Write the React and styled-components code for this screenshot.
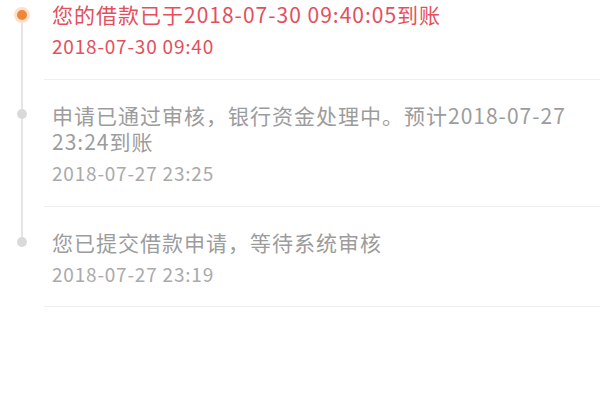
import React from 'react';
import styled, { createGlobalStyle } from 'styled-components';

const Global = createGlobalStyle`
  html, body {
    margin: 0;
    padding: 0;
    background: #fff;
  }
  body {
    font-family: "Noto Sans CJK SC", "Noto Sans", sans-serif;
  }
`;

const Timeline = styled.ul`
  list-style: none;
  margin: 0;
  padding: 0;
  width: 600px;
`;

const Item = styled.li`
  position: relative;
  display: flex;
  padding-left: 44px;
`;

const Rail = styled.div`
  position: absolute;
  left: 21px;
  top: ${(p) => (p.first ? '15px' : '0')};
  bottom: ${(p) => (p.last ? 'auto' : '0')};
  height: ${(p) => (p.last ? p.lastHeight : 'auto')};
  width: 2px;
  background: #e4e4e4;
`;

const Dot = styled.span`
  position: absolute;
  left: ${(p) => (p.active ? '14px' : '17px')};
  top: ${(p) => p.top};
  width: ${(p) => (p.active ? '16px' : '10px')};
  height: ${(p) => (p.active ? '16px' : '10px')};
  border-radius: 50%;
  box-sizing: border-box;
  background: ${(p) => (p.active ? '#f0863a' : '#d9d9d9')};
  border: ${(p) => (p.active ? '3px solid #fde1cb' : 'none')};
`;

const Body = styled.div`
  flex: 1;
  padding: ${(p) => p.pad};
  border-bottom: 1px solid #efefef;
`;

const Title = styled.div`
  font-size: 21px;
  line-height: 26px;
  letter-spacing: 1px;
  color: ${(p) => (p.active ? '#e3505b' : '#9c9c9c')};
  padding-left: 8px;
`;

const Time = styled.div`
  font-size: 19px;
  line-height: 24px;
  letter-spacing: 0.8px;
  margin-top: 7px;
  color: ${(p) => (p.active ? '#e3505b' : '#aaaaaa')};
  padding-left: 8px;
`;

const items = [
  {
    title: '您的借款已于2018-07-30 09:40:05到账',
    time: '2018-07-30 09:40',
    active: true,
    pad: '1px 0 21px',
    dot: '7px',
  },
  {
    title: '申请已通过审核，银行资金处理中。预计2018-07-27 23:24到账',
    time: '2018-07-27 23:25',
    pad: '22px 10px 21px 0',
    dot: '29px',
  },
  {
    title: '您已提交借款申请，等待系统审核',
    time: '2018-07-27 23:19',
    pad: '22px 0 20px',
    dot: '30px',
  },
];

export default function App() {
  return (
    <>
      <Global />
      <Timeline>
        {items.map((it, i) => (
          <Item key={i}>
            <Rail first={i === 0} last={i === items.length - 1} lastHeight="35px" />
            <Dot active={it.active} top={it.dot} />
            <Body pad={it.pad}>
              <Title active={it.active}>{it.title}</Title>
              <Time active={it.active}>{it.time}</Time>
            </Body>
          </Item>
        ))}
      </Timeline>
    </>
  );
}
